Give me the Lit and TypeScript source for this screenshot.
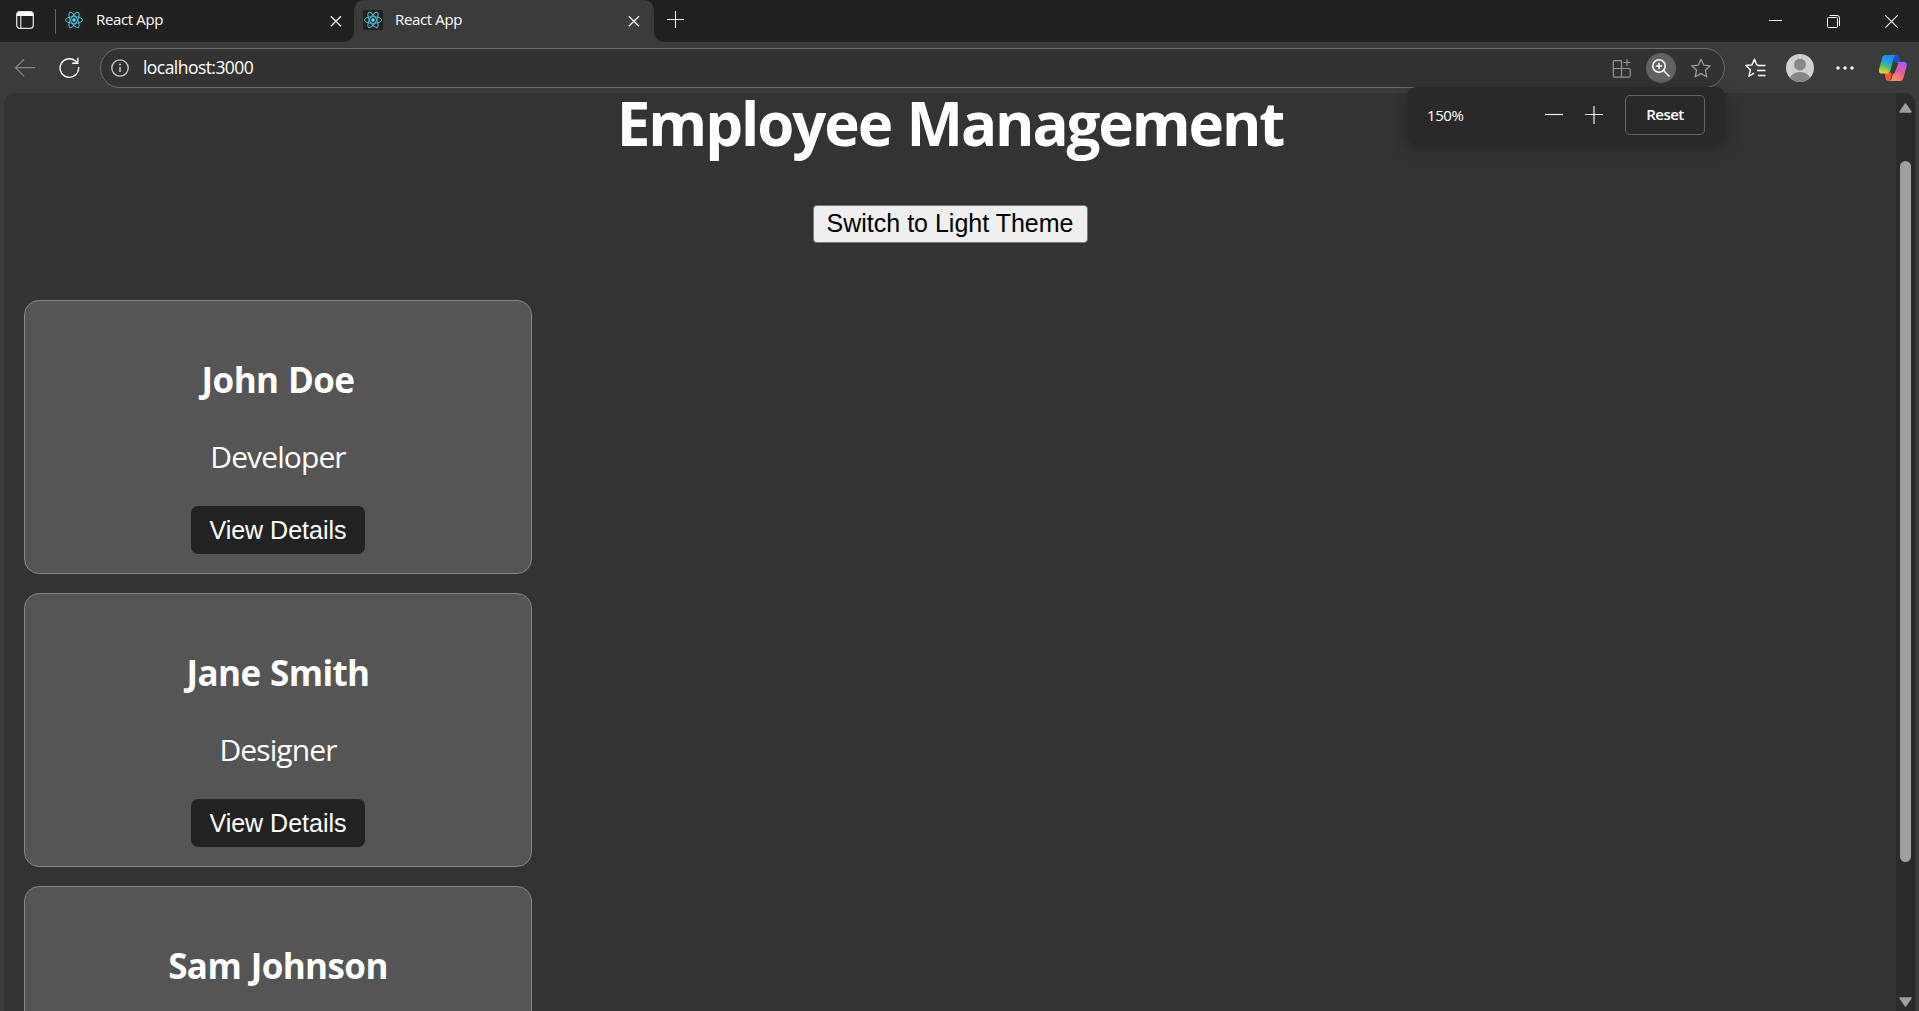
import { LitElement, html, svg, css, nothing } from "lit";
import { customElement, property } from "lit/decorators.js";

const reactLogo = svg`
  <rect width="20" height="20" rx="2.5" fill="#222"/>
  <g fill="none" stroke="#53b9d1" stroke-width="1">
    <ellipse cx="10" cy="10" rx="8.6" ry="3.3"/>
    <ellipse cx="10" cy="10" rx="8.6" ry="3.3" transform="rotate(60 10 10)"/>
    <ellipse cx="10" cy="10" rx="8.6" ry="3.3" transform="rotate(120 10 10)"/>
  </g>
  <circle cx="10" cy="10" r="1.8" fill="#61dafb"/>`;

const star = "M10 1.2 L12.7 7.1 L19.2 7.8 L14.4 12.2 L15.8 18.8 L10 15.6 L4.2 18.8 L5.6 12.2 L0.8 7.8 L7.3 7.1 Z";

@customElement("employee-card")
export class EmployeeCard extends LitElement {
  @property() name = "";
  @property() position = "";

  static styles = css`
    :host { display: block; box-sizing: border-box; width: 508px; height: 274px; flex: none;
      border: 1px solid #868686; border-radius: 15px; background: #555; color: #fff; text-align: center;
      font-family: "Open Sans", "Noto Sans", sans-serif; }
    .inner { display: flex; flex-direction: column; align-items: center; padding-top: 55px; }
    .name { margin: 0; font-size: 35px; line-height: 48px; font-weight: 700; letter-spacing: -0.6px; word-spacing: 1px; white-space: nowrap; }
    .role { margin: 33px 0 0; font-size: 30px; line-height: 40px; letter-spacing: -0.9px; }
    .details { margin: 29px 0 0; padding: 0; width: 174px; height: 48px; border: 0; border-radius: 7px;
      background: #222; color: #fff; font: 25px "Liberation Sans", Arial, sans-serif; }
  `;

  render() {
    return html`<div class="inner">
      <h3 class="name">${this.name}</h3>
      ${this.position
        ? html`<p class="role">${this.position}</p><button class="details">View Details</button>`
        : nothing}
    </div>`;
  }
}

@customElement("browser-tab")
export class BrowserTab extends LitElement {
  @property() label = "";

  static styles = css`
    :host { display: flex; align-items: center; height: 40px; box-sizing: border-box; color: #fff;
      font: 15px "Open Sans", "Noto Sans", sans-serif; }
    svg { display: block; flex: none; }
    .label { flex: 1; margin: -2px 0 0 12px; letter-spacing: -0.35px; }
    .x { margin-top: 1px; }
  `;

  render() {
    return html`
      <svg width="20" height="20" viewBox="0 0 20 20">${reactLogo}</svg>
      <span class="label">${this.label}</span>
      <svg class="x" width="12" height="12" viewBox="0 0 12 12"><path d="M.8 1.2 L11 11.2 M11 1.2 L.8 11.2" stroke="#eee" stroke-width="1.4"/></svg>`;
  }
}

@customElement("app-root")
export class AppRoot extends LitElement {
  static styles = css`
    :host { display: flex; flex-direction: column; width: 1919px; height: 1011px; overflow: hidden;
      background: #3b3b3b; font-family: "Open Sans", "Noto Sans", sans-serif; color: #fff; }
    svg { display: block; flex: none; }

    .tabstrip { display: flex; height: 42px; background: #3b3b3b; flex: none; }
    .seg { display: flex; background: #202020; box-sizing: border-box; }
    .seg.left { width: 354px; border-bottom-right-radius: 10px; padding-left: 16px; }
    .seg.right { flex: 1; border-bottom-left-radius: 10px; padding-left: 12px; }
    .wrap { background: #202020; width: 300px; flex: none; }
    .active { height: 42px; background: #3b3b3b; border-radius: 10px 10px 0 0; padding: 0 14px 2px 9px; box-sizing: border-box; }
    .side { margin-top: 11px; }
    .sep { width: 1px; height: 25px; margin: 9px 0 0 21px; background: #666; }
    .idle { width: 278px; margin-left: 8px; }
    .plus { margin-top: 11px; }
    .min { margin: 20px 0 0 auto; }
    .restore { margin: 15px 0 0 44px; }
    .quit { margin: 15px 21px 0 45px; }

    .toolbar { display: flex; align-items: center; height: 51px; flex: none; padding: 1px 0 0 14px; box-sizing: border-box; }
    .reload { margin-left: 24px; }
    .address { display: flex; align-items: center; width: 1625px; height: 40px; margin-left: 20px; box-sizing: border-box;
      border: 1px solid #6b6b6b; border-radius: 20px; background: #323232; padding: 0 13px 0 10px; }
    .url { flex: 1; margin: -2px 0 0 14px; font-size: 17.5px; letter-spacing: -0.55px; }
    .lens { display: flex; align-items: center; justify-content: center; width: 30px; height: 30px; border-radius: 50%;
      background: #626262; margin: 0 15px 0 15px; }
    .fav { margin-left: 20px; }
    .avatar { margin-left: 20px; }
    .more { margin-left: 22px; }
    .copilot { margin-left: 24px; }

    .page { display: flex; flex: 1; min-height: 0; margin: 0 4px 0 4px; border-radius: 10px 10px 0 0; background: #333; }
    .content { flex: 1; min-width: 0; padding: 0 20px; display: flex; flex-direction: column; }
    .title { margin: 0; flex: none; align-self: center; font-size: 60px; line-height: 60px; font-weight: 700; white-space: nowrap;
      letter-spacing: -2.1px; word-spacing: 2px; }
    .theme { align-self: center; flex: none; margin: 52px 0 0; padding: 0 0 1px; width: 275px; height: 38px; border: 1px solid #777;
      border-radius: 4px; background: #efefef; color: #000; font: 25px "Liberation Sans", Arial, sans-serif; }
    .list { display: flex; flex: 1; min-height: 0; flex-direction: column; gap: 19px; margin-top: 57px; }
    .scroll { display: flex; flex-direction: column; align-items: center; justify-content: space-between; width: 19px;
      background: #2b2b2b; border-top-right-radius: 10px; flex: none; padding: 10px 0 4px; box-sizing: border-box; }
    .thumb { width: 11px; height: 701px; border-radius: 6px; background: #9f9f9f; margin-bottom: 87px; }

    .popup { position: absolute; left: 1407px; top: 87px; width: 318px; height: 55px; box-sizing: border-box; display: flex;
      align-items: center; border-radius: 9px; background: #292929; box-shadow: 0 6px 14px rgba(0,0,0,.28); padding: 0 20px;
      font-size: 15px; }
    .pct { flex: 1; letter-spacing: -0.4px; padding-top: 1px; }
    .inc { margin: 0 22px; }
    .reset { width: 80px; height: 40px; padding: 0 0 2px; border: 1px solid #666; border-radius: 5px; background: transparent;
      color: #fff; font: 600 15px "Open Sans", "Noto Sans", sans-serif; letter-spacing: -0.5px; }
  `;

  private people = [
    { name: "John Doe", position: "Developer" },
    { name: "Jane Smith", position: "Designer" },
    { name: "Sam Johnson", position: "" },
  ];

  render() {
    return html`
      <div class="tabstrip">
        <div class="seg left">
          <svg class="side" width="18" height="18" viewBox="0 0 18 18">
            <rect x=".7" y=".7" width="16.6" height="16.6" rx="3" fill="none" stroke="#ddd" stroke-width="1.3"/>
            <path d="M.7 5V3.5A3 3 0 0 1 3.5.7h11a3 3 0 0 1 2.8 2.8V5z" fill="#fff"/>
            <path d="M4.8 5v12" stroke="#ddd" stroke-width="1.2"/>
          </svg>
          <div class="sep"></div>
          <browser-tab class="idle" label="React App"></browser-tab>
        </div>
        <div class="wrap"><browser-tab class="active" label="React App"></browser-tab></div>
        <div class="seg right">
          <svg class="plus" width="18" height="18" viewBox="0 0 18 18"><path d="M9.5 0v17M1 8.5h17" stroke="#eee" stroke-width="1.1"/></svg>
          <svg class="min" width="13" height="2" viewBox="0 0 13 2"><path d="M0 .5h13" stroke="#fff"/></svg>
          <svg class="restore" width="14" height="14" viewBox="0 0 14 14" fill="none" stroke="#fff">
            <rect x="1.5" y="2.5" width="10" height="10" rx="1"/><path d="M3.5 .5h7.5a2.5 2.5 0 0 1 2.5 2.5v8"/></svg>
          <svg class="quit" width="13" height="13" viewBox="0 0 13 13"><path d="M.3 .3l12.4 12.4M12.7 .3L.3 12.7" stroke="#fff" stroke-width="1.1"/></svg>
        </div>
      </div>

      <div class="toolbar">
        <svg width="21" height="20" viewBox="0 0 21 20" fill="none" stroke="#858585" stroke-width="1.2"><path d="M21 9.7H1.5M10.2 1.2 1.5 9.7l8.7 8.5"/></svg>
        <svg class="reload" width="21" height="22" viewBox="0 0 21 22" fill="none" stroke="#fff" stroke-width="1.4">
          <path d="M19.6 10a9.3 9.3 0 1 1-3.2-6l2.3 2.2"/><path d="M18.8 .8v5.4h-5.6"/></svg>
        <div class="address">
          <svg width="18" height="18" viewBox="0 0 18 18"><circle cx="9" cy="9" r="8.2" fill="none" stroke="#ccc" stroke-width="1.3"/>
            <path d="M9 8v5" stroke="#ccc" stroke-width="1.5"/><circle cx="9" cy="5.6" r="1" fill="#ccc"/></svg>
          <span class="url">localhost:3000</span>
          <svg width="19" height="19" viewBox="0 0 19 19" fill="none" stroke="#949494" stroke-width="1.2">
            <path d="M9.5 9.5V1.6H2.5A1.2 1.2 0 0 0 1.3 2.8V17A1.2 1.2 0 0 0 2.5 18.2h14.5a1.2 1.2 0 0 0 1.2-1.2v-6.3a1.2 1.2 0 0 0-1.2-1.2H1.3M9.5 9.5v8.7"/>
            <path d="M15 0v7M11.5 3.5h7"/></svg>
          <div class="lens"><svg width="18" height="18" viewBox="0 0 18 18" fill="none" stroke="#fff" stroke-width="1.5">
            <circle cx="7" cy="7" r="6.2"/><path d="M11.5 11.5l6 6M7 3.8v6.4M3.8 7h6.4"/></svg></div>
          <svg width="20" height="20" viewBox="0 0 20 20"><path d="${star}" fill="none" stroke="#9a9a9a" stroke-width="1.3" stroke-linejoin="round"/></svg>
        </div>
        <svg class="fav" width="21" height="20" viewBox="0 0 21 20" fill="none" stroke="#fff" stroke-width="1.4" stroke-linejoin="round">
          <path d="M13.5 7.3 11.8 6.9 9.5 1.2 7 6.9.8 7.5l4.6 4.3L4 18.2l5-3"/><path d="M13 7.5h7.5M12 12.5h8.5M13 17.5h7.5"/></svg>
        <svg class="avatar" width="28" height="28" viewBox="0 0 28 28">
          <clipPath id="face"><circle cx="14" cy="14" r="14"/></clipPath>
          <circle cx="14" cy="14" r="14" fill="#d2d0ce"/>
          <circle cx="14" cy="10.5" r="6" fill="#8a8886"/>
          <ellipse cx="14" cy="26" rx="10.5" ry="8" fill="#8a8886" clip-path="url(#face)"/></svg>
        <svg class="more" width="18" height="4" viewBox="0 0 18 4" fill="#fff"><circle cx="2" cy="2" r="1.7"/><circle cx="9" cy="2" r="1.7"/><circle cx="16" cy="2" r="1.7"/></svg>
        <svg class="copilot" width="30" height="28" viewBox="0 0 30 28">
          <defs>
            <linearGradient id="cl" x1=".6" y1="0" x2=".3" y2="1"><stop offset="0" stop-color="#168fe6"/><stop offset=".35" stop-color="#1f9fe0"/><stop offset=".65" stop-color="#5cbf6a"/><stop offset="1" stop-color="#f7d41c"/></linearGradient>
            <linearGradient id="cr" x1=".7" y1="0" x2=".4" y2="1"><stop offset="0" stop-color="#a45cf0"/><stop offset=".5" stop-color="#ec5a9c"/><stop offset="1" stop-color="#ff8f5a"/></linearGradient>
          </defs>
          <path d="M14 1h4.5c1.8 0 2.5 1 3 2.6L22.5 8H17z" fill="#1a4fd8"/>
          <path d="M6.5 18.5H14l-2 8.5H10.5C8.7 27 8 26 7.6 24.5z" fill="#ff5a3c"/>
          <path d="M7.5 1H18c-1.5.6-2 2-2.5 4l-3 11c-.8 2.5-2 3.5-4.5 3.5H4C1.2 19.5.5 17.5 1.3 14.5L4 4.5C4.6 2.2 5.500 1 7.5 1z" fill="url(#cl)"/>
          <path d="M22 27H11.5c1.5-.6 2-2 2.5-4l3-11.5c.7-2.5 2-3.5 4.5-3.5H26c2.8 0 3.2 2 2.5 5l-3 10.5c-.6 2.3-1.5 3.5-3.5 3.5z" fill="url(#cr)"/>
          <path d="M16.200 9h4.300l-4 10.500h-3.500z" fill="#3b3b3b"/>
        </svg>
      </div>

      <div class="page">
        <div class="content">
          <h1 class="title">Employee Management</h1>
          <button class="theme">Switch to Light Theme</button>
          <div class="list">
            ${this.people.map((p) => html`<employee-card .name=${p.name} .position=${p.position}></employee-card>`)}
          </div>
        </div>
        <div class="scroll">
          <svg width="13" height="10" viewBox="0 0 13 10"><path d="M6.5 1 12 9H1z" fill="#9f9f9f" stroke="#9f9f9f" stroke-width="1.5" stroke-linejoin="round"/></svg>
          <div class="thumb"></div>
          <svg width="13" height="10" viewBox="0 0 13 10"><path d="M6.5 9 12 1H1z" fill="#9f9f9f" stroke="#9f9f9f" stroke-width="1.5" stroke-linejoin="round"/></svg>
        </div>
      </div>

      <div class="popup">
        <span class="pct">150%</span>
        <svg width="18" height="18" viewBox="0 0 18 18"><path d="M0 8.5h18" stroke="#eee" stroke-width="1.2"/></svg>
        <svg class="inc" width="18" height="18" viewBox="0 0 18 18"><path d="M0 8.5h18M9 0v18" stroke="#eee" stroke-width="1.2"/></svg>
        <button class="reset">Reset</button>
      </div>`;
  }
}
